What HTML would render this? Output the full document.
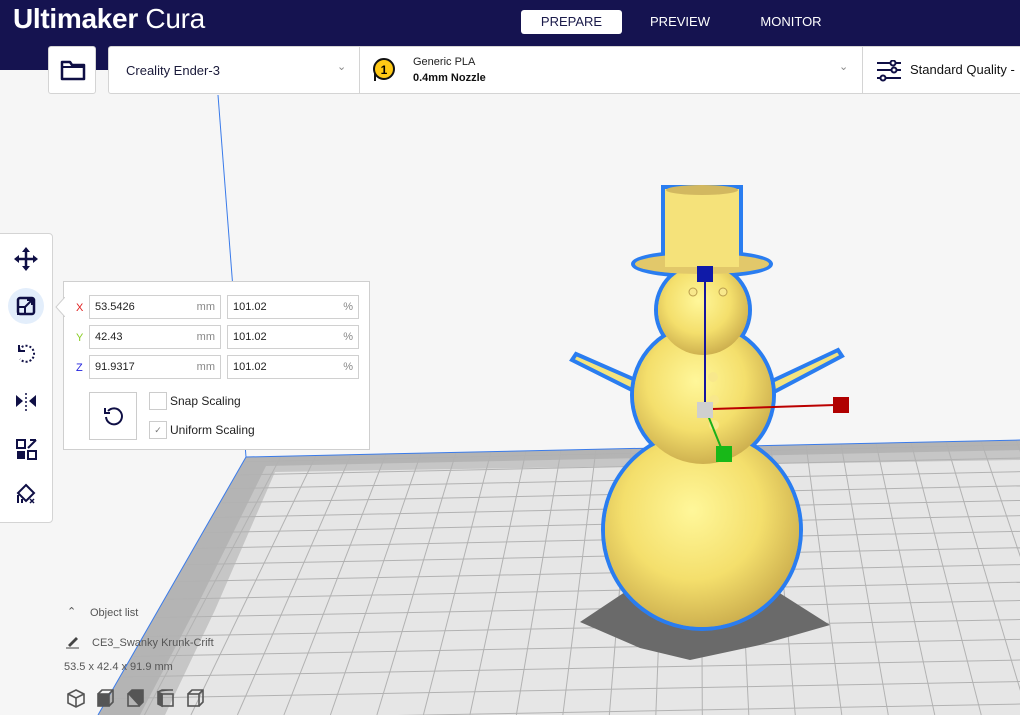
<!DOCTYPE html>
<html><head><meta charset="utf-8"><style>
*{margin:0;padding:0;box-sizing:border-box}
body{width:1020px;height:715px;overflow:hidden;background:#f6f6f6;font-family:"Liberation Sans",sans-serif;position:relative;color:#0a0a3a}
#hdr{position:absolute;left:0;top:0;width:1020px;height:70px;background:#151350}
.logo{position:absolute;left:13px;top:3px;color:#fff;font-size:28px;letter-spacing:-0.3px}
.logo b{font-weight:bold}
.tab{position:absolute;top:10px;height:24px;font-size:13px;color:#fff;line-height:24px;text-align:center}
.sel{background:#fff;color:#1a1a4a;border-radius:3px}
.box{position:absolute;background:#fff;border:1px solid #d4d4d4}
svg{position:absolute}
.pn{position:absolute;left:63px;top:281px;width:307px;height:169px;background:#fff;border:1px solid #cfcfcf}
.fld{position:absolute;height:24px;border:1px solid #d0d0d0;background:#fff;font-size:11px;line-height:22px;padding-left:5px;color:#222}
.fld span{position:absolute;right:5px;color:#888}
.lab{position:absolute;font-size:11px;left:12px}
.cb{position:absolute;width:18px;height:18px;border:1px solid #ccc;background:#fff}
.t{position:absolute;font-size:11px;color:#333}
</style></head><body>
<svg width="1020" height="715" style="left:0;top:0">
<line x1="218" y1="95" x2="246" y2="457" stroke="#3a7bea" stroke-width="1"/>
<polygon points="246,457 1020,440 1020,715 98,715" fill="#b4b4b4"/>
<polygon points="266,466 1020,450 1020,715 140,715 200,600" fill="#c6c6c6"/>
<polygon points="275,472 1020,460 1020,715 165,715 215,610" fill="#e6e6e6"/>
<g id="grid" stroke="#b2b2b2" stroke-width="1"></g>
<polyline points="246,457 1020,440" stroke="#3a7bea" fill="none"/>
<polyline points="246,457 98,715" stroke="#3a7bea" fill="none"/>
<polygon points="580,622 628,590 778,592 830,625 760,645 690,660 640,648" fill="#6a6a6a"/>
<defs>
<radialGradient id="g" cx="0.45" cy="0.4" r="0.65"><stop offset="0" stop-color="#fff79a"/><stop offset="0.55" stop-color="#f4df6c"/><stop offset="1" stop-color="#c7a84a"/></radialGradient>
</defs>
<g stroke="#2a7df0" stroke-width="4">
<polygon points="576,354 640,382 636,392 572,360" fill="#f4e47e"/>
<polygon points="838,350 770,382 774,392 842,356" fill="#f4e47e"/>
<circle cx="702" cy="530" r="99" fill="url(#g)"/>
<circle cx="703" cy="395" r="71" fill="url(#g)"/>
<circle cx="703" cy="310" r="47" fill="url(#g)"/>
<ellipse cx="702" cy="264" rx="69" ry="12" fill="#e2c86a"/>
<rect x="663" y="187" width="78" height="80" fill="#f5e27a"/>
</g>
<g stroke="none">
<circle cx="702" cy="530" r="97" fill="url(#g)"/>
<circle cx="703" cy="395" r="69" fill="url(#g)"/>
<circle cx="703" cy="310" r="45" fill="url(#g)"/>
<ellipse cx="702" cy="264" rx="67" ry="10" fill="#e2c86a"/>
<rect x="665" y="189" width="74" height="78" fill="#f5e27a"/>
<ellipse cx="702" cy="190" rx="36" ry="5" fill="#d2b860"/>
<circle cx="693" cy="292" r="4" fill="#f8e88c" stroke="#b99c4c"/>
<circle cx="723" cy="292" r="4" fill="#f8e88c" stroke="#b99c4c"/>
<circle cx="713" cy="377" r="5" fill="#f8e88c"/><circle cx="714" cy="400" r="5" fill="#f8e88c"/><circle cx="714" cy="425" r="5" fill="#f8e88c"/>
</g>
<line x1="705" y1="275" x2="705" y2="405" stroke="#1616a0" stroke-width="2"/>
<rect x="697" y="266" width="16" height="16" fill="#0f1aa8"/>
<line x1="712" y1="409" x2="835" y2="405" stroke="#b00" stroke-width="2"/>
<rect x="833" y="397" width="16" height="16" fill="#b00000"/>
<line x1="707" y1="413" x2="722" y2="450" stroke="#1ab01a" stroke-width="2"/>
<rect x="716" y="446" width="16" height="16" fill="#18b818"/>
<rect x="697" y="402" width="16" height="16" fill="#cfcfcf"/>
</svg>
<script>
var g=document.getElementById('grid'),s='';
var vx=697,vy=-329;
for(var i=1;i<30;i++){var x0=246+35*i;if(x0>1100)break;var t=(715-vy)/(457-vy);var x1=vx+(x0-vx)*t;var yt=457-(x0-246)*0.022;s+='<line x1="'+x0+'" y1="'+yt+'" x2="'+x1+'" y2="715"/>';}
for(var k=1;k<40;k++){var d=1/774-k*2.1e-5;var y=(1/d)-329;var off=y-457;if(y>720)break;
 var xl=246-0.574*off;s+='<line x1="'+xl+'" y1="'+(y+4)+'" x2="1020" y2="'+(y-13)+'"/>';}
g.innerHTML=s;
</script>
<div id="hdr">
<div class="logo"><b>Ultimaker</b> Cura</div>
<div class="tab sel" style="left:521px;width:101px">PREPARE</div>
<div class="tab" style="left:640px;width:80px">PREVIEW</div>
<div class="tab" style="left:750px;width:82px">MONITOR</div>
</div>
<div class="box" style="left:48px;top:46px;width:48px;height:48px;border-radius:3px">
<svg width="26" height="22" style="left:11px;top:12px"><path d="M2 3h8l2 3h12v14H2z" fill="none" stroke="#0f0f45" stroke-width="2.5" stroke-linejoin="round"/><path d="M2 8h22" stroke="#0f0f45" stroke-width="2"/></svg>
</div>
<div class="box" style="left:108px;top:46px;width:930px;height:48px;border-radius:3px 0 0 3px">
<div class="t" style="left:17px;top:16px;font-size:13px;color:#1a1a3a">Creality Ender-3</div>
<div class="t" style="left:228px;top:13px;color:#888">&#8964;</div>
<div style="position:absolute;left:250px;top:0;width:1px;height:46px;background:#d4d4d4"></div>
<svg width="26" height="26" style="left:263px;top:10px"><circle cx="12" cy="12" r="10" fill="#ffc916" stroke="#111" stroke-width="2"/><path d="M3 16v8" stroke="#111" stroke-width="2"/><text x="12" y="17" font-size="12" font-weight="bold" text-anchor="middle" font-family="Liberation Sans">1</text></svg>
<div class="t" style="left:304px;top:9px;color:#222">Generic PLA</div>
<div class="t" style="left:304px;top:25px;font-weight:bold;color:#111">0.4mm Nozzle</div>
<div class="t" style="left:730px;top:13px;color:#888">&#8964;</div>
<div style="position:absolute;left:753px;top:0;width:1px;height:46px;background:#d4d4d4"></div>
<svg width="26" height="22" style="left:767px;top:13px" stroke="#0f0f45" stroke-width="2" fill="none"><path d="M1 3h24M1 10h24M1 18h24"/><circle cx="17" cy="3" r="2.5" fill="#fff"/><circle cx="18" cy="10" r="2.5" fill="#fff"/><circle cx="7" cy="18" r="2.5" fill="#fff"/></svg>
<div class="t" style="left:801px;top:15px;font-size:13px;color:#111">Standard Quality -</div>
</div>
<div class="box" style="left:-5px;top:233px;width:58px;height:290px;border-radius:4px"></div>
<svg width="53" height="290" style="left:0;top:233px" fill="#0f0f45" stroke="#0f0f45">
<path d="M26 16v20M16 26h20" stroke-width="2.5"/><path d="M26 14l-4 5h8zM26 38l-4-5h8zM14 26l5-4v8zM38 26l-5-4v8z" stroke="none"/>
<circle cx="26" cy="73" r="18" fill="#e3eefb" stroke="none"/>
<rect x="18" y="65" width="16" height="16" rx="2" fill="none" stroke-width="2.5"/><rect x="18" y="74" width="7" height="7" fill="none" stroke-width="2"/><path d="M24 75l8-8M27 67h5v5" fill="none" stroke-width="2"/>
<path d="M19 117a8 8 0 1 1 1 9" fill="none" stroke-width="2" stroke-dasharray="2 2"/><path d="M19 112v6h6" fill="none" stroke-width="2"/>
<path d="M16 162l7 6-7 6zM36 162l-7 6 7 6z" stroke="none"/><path d="M26 160v18" stroke-width="1.5" stroke-dasharray="2 2"/>
<rect x="17" y="207" width="8" height="8" fill="none" stroke-width="2"/><rect x="17" y="218" width="8" height="8" stroke="none"/><rect x="28" y="218" width="8" height="8" fill="none" stroke-width="2"/><path d="M28 215l8-8M30 207l6-0" stroke-width="2"/>
<path d="M26 252l8 8-8 8-8-8z" fill="none" stroke-width="2"/><path d="M18 262v8M22 266v4" stroke-width="2"/><path d="M30 266l4 4M34 266l-4 4" stroke-width="1.5"/>
</svg>
<div class="pn">
<svg width="10" height="20" style="left:-9px;top:15px"><path d="M10 0L1 10L10 20" fill="#fff" stroke="#cfcfcf"/></svg>
<div class="lab" style="top:20px;color:#e02020">X</div>
<div class="lab" style="top:50px;color:#8c2">Y</div>
<div class="lab" style="top:80px;color:#2222dd">Z</div>
<div class="fld" style="left:25px;top:13px;width:132px">53.5426<span>mm</span></div>
<div class="fld" style="left:163px;top:13px;width:132px">101.02<span>%</span></div>
<div class="fld" style="left:25px;top:43px;width:132px">42.43<span>mm</span></div>
<div class="fld" style="left:163px;top:43px;width:132px">101.02<span>%</span></div>
<div class="fld" style="left:25px;top:73px;width:132px">91.9317<span>mm</span></div>
<div class="fld" style="left:163px;top:73px;width:132px">101.02<span>%</span></div>
<div style="position:absolute;left:25px;top:110px;width:48px;height:48px;border:1px solid #ccc">
<svg width="22" height="22" style="left:12px;top:12px"><path d="M6 6a8 8 0 1 1-2 6" fill="none" stroke="#0f0f45" stroke-width="2"/><path d="M3 3v5h5" fill="none" stroke="#0f0f45" stroke-width="2"/></svg></div>
<div class="cb" style="left:85px;top:110px"></div>
<div class="t" style="left:106px;top:112px;font-size:12px;color:#222">Snap Scaling</div>
<div class="cb" style="left:85px;top:139px;font-size:9px;color:#777;text-align:center;line-height:16px">&#10003;</div>
<div class="t" style="left:106px;top:141px;font-size:12px;color:#222">Uniform Scaling</div>
</div>
<div class="t" style="left:67px;top:605px;color:#555">&#8963;</div>
<div class="t" style="left:90px;top:607px;color:#555">Object list</div>
<svg width="14" height="14" style="left:66px;top:635px"><path d="M2 10l8-8 2 2-8 8z" fill="#444"/><path d="M0 13h13" stroke="#444"/></svg>
<div class="t" style="left:92px;top:637px;color:#555">CE3_Swanky Krunk-Crift</div>
<div class="t" style="left:64px;top:661px;color:#555">53.5 x 42.4 x 91.9 mm</div>
<svg width="145" height="22" style="left:66px;top:688px" stroke="#555" stroke-width="1.6" fill="none">
<path d="M10 2l8 4v9l-8 4-8-4V6zM2 6l8 4 8-4M10 10v9"/>
<rect x="32" y="6" width="11" height="12" fill="#555"/><path d="M32 6l4-4h11v12l-4 4M43 6l4-4"/>
<rect x="62" y="6" width="11" height="12"/><path d="M62 6l4-4h11v12l-4 4M73 6l4-4" fill="#555"/>
<rect x="96" y="6" width="11" height="12"/><path d="M92 4l4 2v12l-4-2zM92 4l4-2h11" fill="#555"/>
<rect x="122" y="6" width="11" height="12"/><path d="M122 6l4-4h11v12l-4 4M133 6l4-4"/>
</svg>
</body></html>
